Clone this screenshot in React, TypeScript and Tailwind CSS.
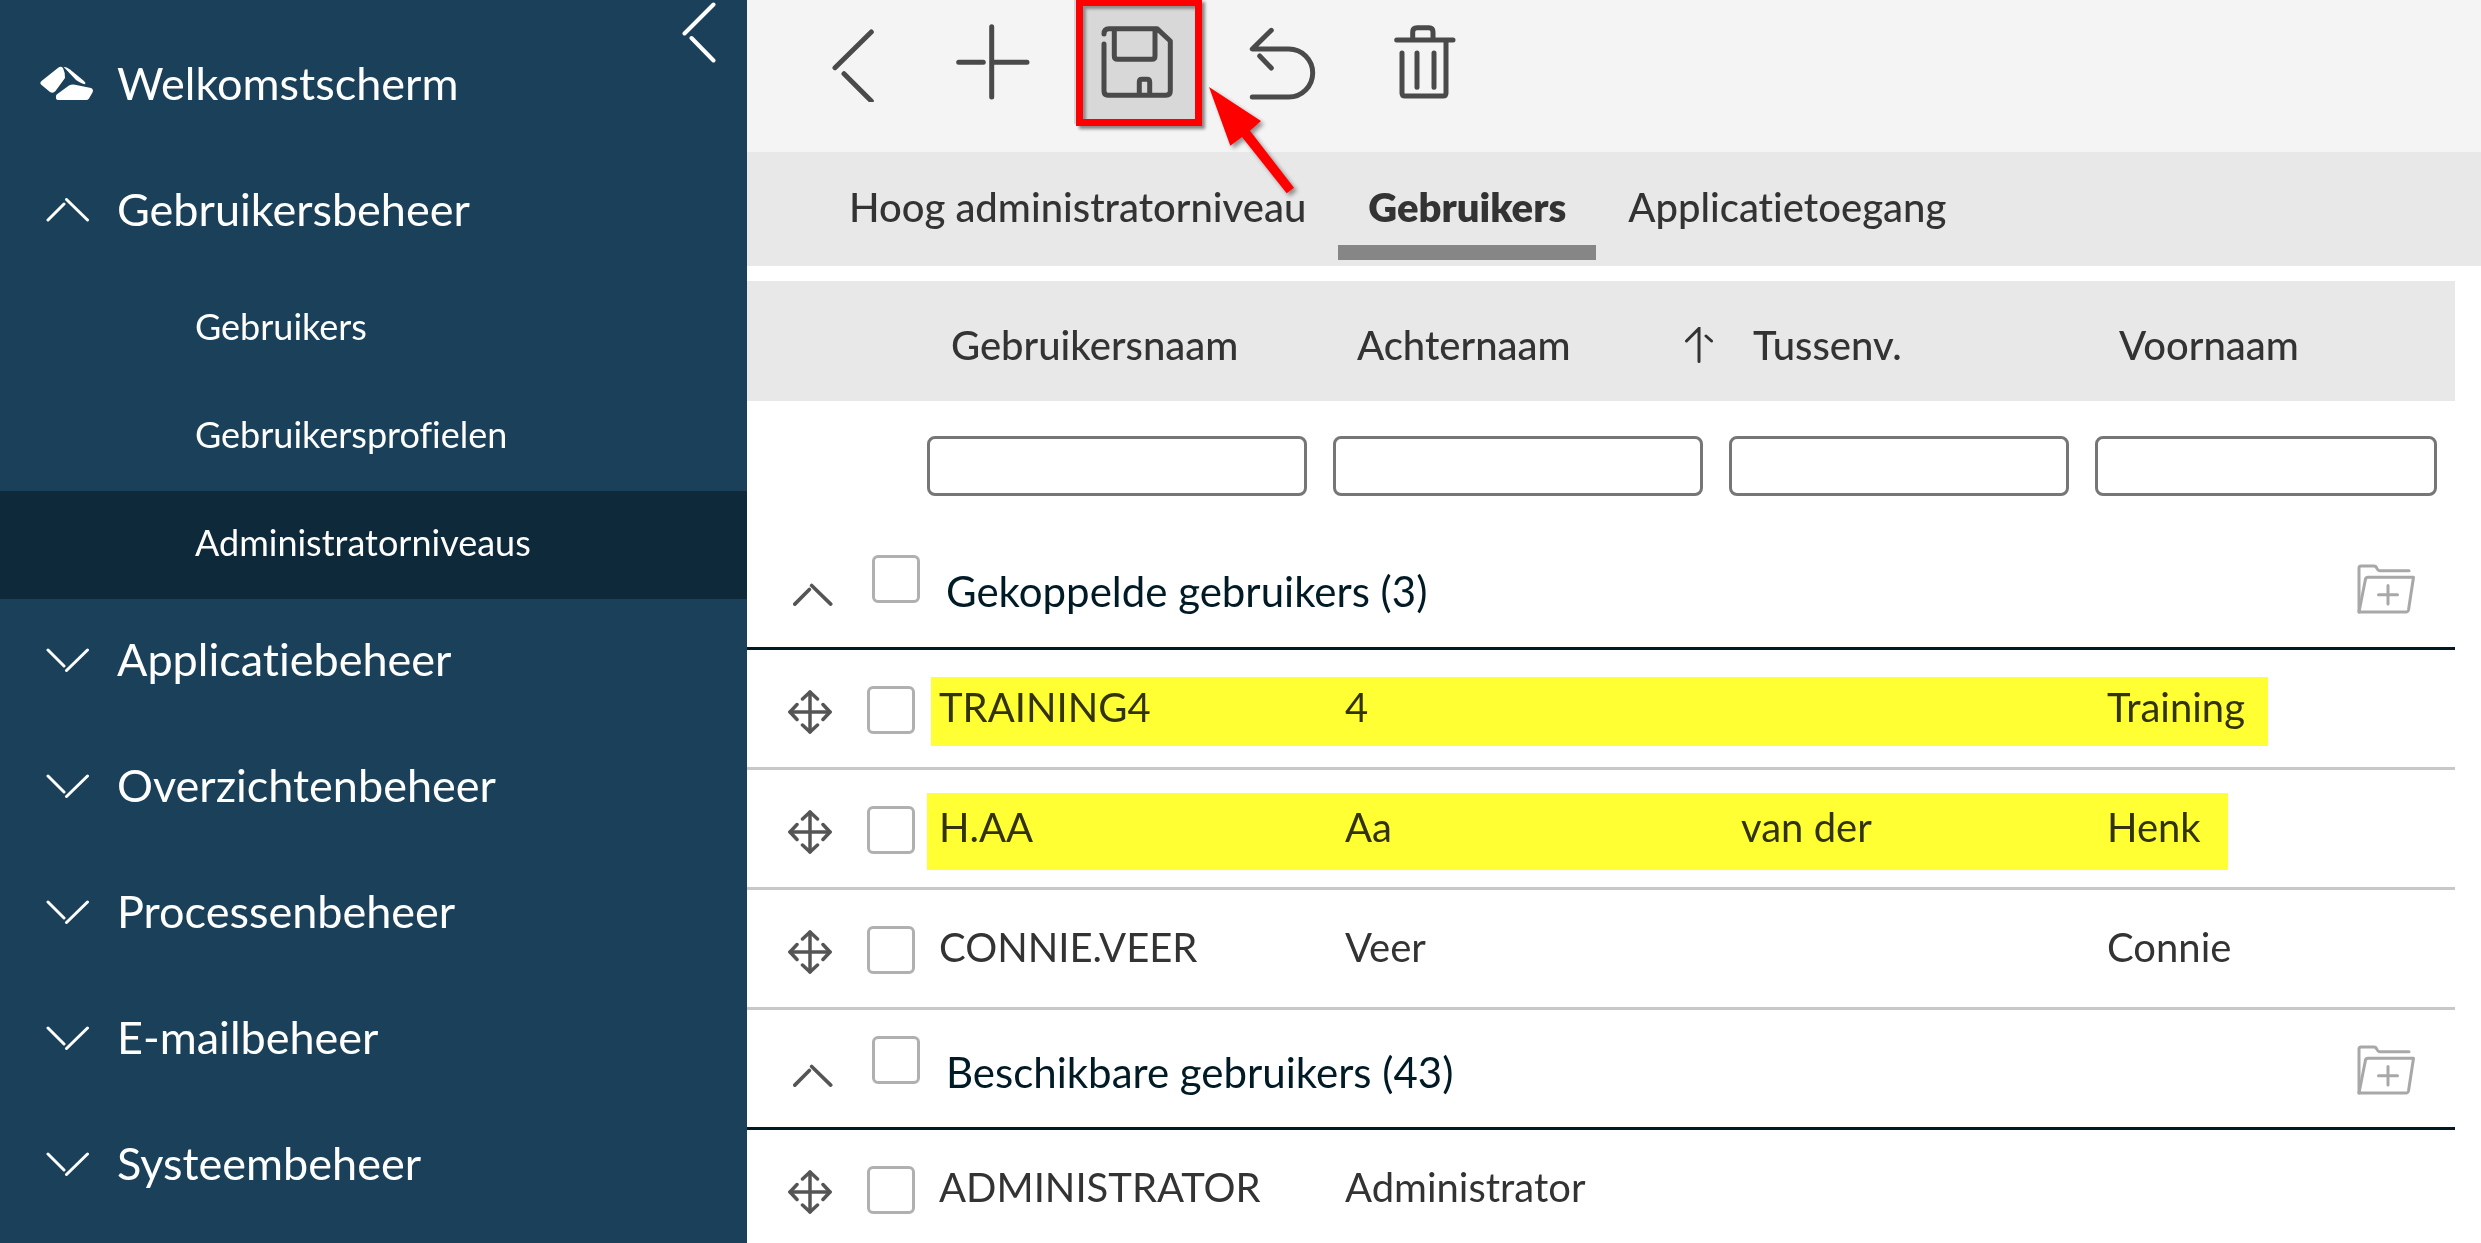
import { useState } from "react";

type User = {
  username: string;
  lastName: string;
  infix: string;
  firstName: string;
  mark?: string;
};

type Group = { id: string; label: string; users: User[] };

const SUB_ITEMS = ["Gebruikers", "Gebruikersprofielen", "Administratorniveaus"];

const MENU_ITEMS = [
  "Applicatiebeheer",
  "Overzichtenbeheer",
  "Processenbeheer",
  "E-mailbeheer",
  "Systeembeheer",
];

const TABS = ["Hoog administratorniveau", "Gebruikers", "Applicatietoegang"];

const GROUPS: Group[] = [
  {
    id: "linked",
    label: "Gekoppelde gebruikers (3)",
    users: [
      { username: "TRAINING4", lastName: "4", infix: "", firstName: "Training", mark: "left-1 top-[27px] h-[69px] w-[1337px]" },
      { username: "H.AA", lastName: "Aa", infix: "van der", firstName: "Henk", mark: "left-0 top-[23px] h-[77px] w-[1301px]" },
      { username: "CONNIE.VEER", lastName: "Veer", infix: "", firstName: "Connie" },
    ],
  },
  {
    id: "available",
    label: "Beschikbare gebruikers (43)",
    users: [{ username: "ADMINISTRATOR", lastName: "Administrator", infix: "", firstName: "" }],
  },
];

function Chevron({ className = "" }: { className?: string }) {
  return (
    <svg viewBox="0 0 44 24" fill="none" stroke="currentColor" strokeLinecap="round" className={`shrink-0 ${className}`}>
      <path d="M2 22 18 6M20.500 1.500 41.500 22" />
    </svg>
  );
}

function LogoIcon() {
  return (
    <svg viewBox="0 0 54 36" fill="currentColor" className="h-9 w-[54px] shrink-0">
      <path d="M18.500 1.500Q21 0 23 2 25 6 25 12L15.500 25Q13 28 10 26L1 18.500Q-.5 16.500 1.500 15Z" />
      <path d="M23.500 .7Q26.500 .7 30 3.500L44 15Q46.500 17.500 44.500 18.200 42 18 36 14Z" />
      <path d="M16 30Q16 28.500 18 27.500L29 19.500Q31.500 18.200 35 18.700L51 22Q54 23.500 52.500 26.500L49 32.500Q48 34 46 34H18Q15.500 34 16 30Z" />
    </svg>
  );
}

function ToolIcon({ d }: { d: string }) {
  return (
    <svg viewBox="0 0 80 80" fill="none" stroke="#4a4a4a" strokeWidth="5" strokeLinecap="round" strokeLinejoin="round" className="size-20">
      <path d={d} />
    </svg>
  );
}

const ICONS = {
  back: "M61.300 10 25 45.700M34 51.700 61.300 79",
  add: "M37.700 4.700V75M4.700 40.300H29.300M37.700 40.300H73",
  save: "M6 12Q6 6.700 11 6.700H59L72.300 19V69Q72.300 73.300 68 73.300H10Q6 73.300 6 69V22M16.300 7V34Q16.300 37.300 19.600 37.300H54Q57 37.300 57 34V7M41.300 73V60Q41.300 57.300 44 57.300H49Q51.700 57.300 51.700 60V73",
  undo: "M29.300 8.300 10.300 27H46.700A24 24 0 0 1 46.700 75H10.300M17.700 34 29.300 46",
  trash: "M10.700 18H67M26.700 18V10Q26.700 5.700 31 5.700H43Q47 5.700 47 10V18M16 31V71Q16 74 19 74H57Q60 74 60 71V20M31 31V65.300M48 31V65.300",
};

function MoveIcon() {
  return (
    <svg viewBox="0 0 44 44" fill="none" stroke="#555" strokeWidth="3.500" strokeLinecap="round" strokeLinejoin="round" className="size-11">
      <path d="M22 2V42M2 22H42" />
      <path d="M14.500 9 22 2 29.500 9M14.500 35 22 42 29.500 35M9 14.500 2 22 9 29.500M35 14.500 42 22 35 29.500" />
    </svg>
  );
}

function FolderPlusIcon() {
  return (
    <svg viewBox="0 0 58 50" fill="none" stroke="#a8a8a8" strokeWidth="3" strokeLinecap="round" strokeLinejoin="round" className="h-[50px] w-[58px]">
      <path d="M2 48V4Q2 2 4 2H17Q19 2 20 4.500 21 6.700 23 6.700H52" />
      <path d="M2 48 8.500 15Q9 13.300 11 13.300H56.500L51.500 46Q51 48 49 48ZM31 21.500V40M21.500 30.700H40.500" />
    </svg>
  );
}

function Checkbox({ label }: { label: string }) {
  return (
    <input
      type="checkbox"
      aria-label={label}
      className="block size-12 appearance-none rounded-md border-[3px] border-[#b0b0b0] bg-white checked:bg-[#1a4159]"
    />
  );
}

function Sidebar() {
  const [active, setActive] = useState("Administratorniveaus");

  return (
    <nav className="relative w-[747px] shrink-0 bg-[#1a4159] pt-[23px] text-white">
      <button aria-label="Menu inklappen" className="absolute right-[31px] top-0.5">
        <svg viewBox="0 0 34 62" fill="none" stroke="currentColor" strokeWidth="4" strokeLinecap="round" className="h-[62px] w-[34px]">
          <path d="M31.500 2.500 2.500 31.500M9.500 36 31.500 58.500" />
        </svg>
      </button>

      <a href="#" className="flex h-[126px] items-center gap-[23px] pb-1 pl-10 text-[45px]">
        <LogoIcon />
        Welkomstscherm
      </a>

      <button className="flex h-[126px] w-full items-center gap-[27px] pb-1 pl-[46px] text-[45px]">
        <Chevron className="h-6 w-11 stroke-[3]" />
        Gebruikersbeheer
      </button>
      <ul>
        {SUB_ITEMS.map(item => (
          <li key={item}>
            <a
              href="#"
              onClick={() => setActive(item)}
              className={`flex h-[108px] items-center pb-1.5 pl-[195px] text-[36px] ${item === active ? "bg-[#0d293a]" : ""}`}
            >
              {item}
            </a>
          </li>
        ))}
      </ul>

      {MENU_ITEMS.map(item => (
        <button key={item} className="flex h-[126px] w-full items-center gap-[27px] pb-1 pl-[46px] text-[45px]">
          <Chevron className="h-6 w-11 -scale-y-100 stroke-[3]" />
          {item}
        </button>
      ))}
    </nav>
  );
}

function Toolbar() {
  return (
    <div className="flex h-[152px] items-start gap-4 bg-[#f4f4f4] pl-[39px]">
      <button aria-label="Terug" className="flex h-[124px] w-32 items-center justify-center">
        <ToolIcon d={ICONS.back} />
      </button>
      <button aria-label="Nieuw" className="flex h-[124px] w-32 items-center justify-center">
        <ToolIcon d={ICONS.add} />
      </button>
      <div className="relative">
        <button aria-label="Opslaan" className="flex h-[124px] w-32 items-center justify-center bg-[#d8d8d8]">
          <ToolIcon d={ICONS.save} />
        </button>
        {/* red frame and arrow over the save button */}
        <div className="pointer-events-none absolute -top-px left-0.5 h-[127px] w-[126px] border-[7px] border-[#f00] shadow-[3px_3px_3px_rgba(0,0,0,0.45),inset_3px_3px_3px_rgba(0,0,0,0.35)]" />
        <svg viewBox="0 0 90 110" className="pointer-events-none absolute left-[133px] top-[85px] z-10 h-[110px] w-[90px] overflow-visible drop-shadow-[3px_3px_2px_rgba(0,0,0,0.4)]">
          <path fill="#f00" d="M2 2 54 36 43 45.700 87 102.700 79.700 108.300 35 52 23.300 60.700Z" />
        </svg>
      </div>
      <button aria-label="Ongedaan maken" className="flex h-[124px] w-32 items-center justify-center">
        <ToolIcon d={ICONS.undo} />
      </button>
      <button aria-label="Verwijderen" className="flex h-[124px] w-32 items-center justify-center">
        <ToolIcon d={ICONS.trash} />
      </button>
    </div>
  );
}

function Tabs() {
  const [tab, setTab] = useState("Gebruikers");

  return (
    <div role="tablist" className="flex h-[114px] gap-0.5 bg-[#e8e8e8] pb-1.5 pl-[72px] text-[#333]">
      {TABS.map(t => (
        <button
          key={t}
          role="tab"
          aria-selected={t === tab}
          onClick={() => setTab(t)}
          className={`border-b-[15px] px-[30px] pt-4 text-[40px] ${t === tab ? "border-[#868686] font-extrabold" : "border-transparent font-medium"}`}
        >
          {t}
        </button>
      ))}
    </div>
  );
}

function UserTable() {
  return (
    <table className="mt-[15px] w-full table-fixed border-collapse text-left text-[40px] leading-[48px] text-[#333]">
      <colgroup>
        <col className="w-[120px]" />
        <col className="w-[60px]" />
        <col className="w-[406px]" />
        <col className="w-[396px]" />
        <col className="w-[366px]" />
        <col />
      </colgroup>
      <thead>
        <tr className="h-[120px] bg-[#e8e8e8]">
          <td colSpan={2} />
          <th className="pl-6 pt-2 font-medium">Gebruikersnaam</th>
          <th className="pl-6 pt-2 font-medium">
            <div className="flex items-center justify-between pr-4">
              Achternaam
              <svg viewBox="0 0 28 36" fill="none" stroke="#333" strokeWidth="3" strokeLinecap="round" className="h-9 w-7">
                <path d="M14 34.500V1.500L1.500 14M21 9 26.500 14" />
              </svg>
            </div>
          </th>
          <th className="pl-6 pt-2 font-medium">Tussenv.</th>
          <th className="pl-6 pt-2 font-medium">Voornaam</th>
        </tr>
        <tr className="h-[127px]">
          <td colSpan={2} />
          {["Gebruikersnaam", "Achternaam", "Tussenv.", "Voornaam"].map(name => (
            <td key={name} className="pr-[26px] pt-0.5 last:pr-[18px]">
              <input
                type="text"
                aria-label={`Filter ${name}`}
                className="block h-[60px] w-full rounded-lg border-[3px] border-[#767676] bg-white px-3 text-[32px]"
              />
            </td>
          ))}
        </tr>
      </thead>

      {GROUPS.map(group => (
        <tbody key={group.id}>
          <tr className="h-[120px] border-b-[3px] border-[#001a26] text-[#001a26]">
            <td className="pl-[46px] pt-4">
              <button aria-label={`${group.label} inklappen`} className="block">
                <Chevron className="h-6 w-10 stroke-[4] text-[#555]" />
              </button>
            </td>
            <td className="pb-4 pl-[5px]">
              <Checkbox label={`${group.label} selecteren`} />
            </td>
            <td colSpan={3} className="pl-[19px] pt-2 text-[42px]">{group.label}</td>
            <td className="pr-10 pt-1">
              <button aria-label="Groep toevoegen" className="ml-auto block">
                <FolderPlusIcon />
              </button>
            </td>
          </tr>
          {group.users.map(user => (
            <tr key={user.username} className="h-[120px] border-b-[3px] border-[#c8c8c8]">
              <td className="pl-[41px] pt-2">
                <MoveIcon />
              </td>
              <td className="pt-1">
                <Checkbox label={`${user.username} selecteren`} />
              </td>
              <td className="relative pb-0.5 pl-3">
                {user.username}
                {user.mark && <span className={`absolute bg-[#ffff33] mix-blend-multiply ${user.mark}`} />}
              </td>
              <td className="pb-0.5 pl-3">{user.lastName}</td>
              <td className="pb-0.5 pl-3">{user.infix}</td>
              <td className="pb-0.5 pl-3">{user.firstName}</td>
            </tr>
          ))}
        </tbody>
      ))}
    </table>
  );
}

export default function App() {
  return (
    <div className="flex h-screen overflow-hidden bg-white font-['Lato','Open_Sans',sans-serif] [font-variant-ligatures:none]">
      <Sidebar />
      <main className="min-w-0 flex-1">
        <Toolbar />
        <Tabs />
        <div className="pr-[26px]">
          <UserTable />
        </div>
      </main>
    </div>
  );
}
